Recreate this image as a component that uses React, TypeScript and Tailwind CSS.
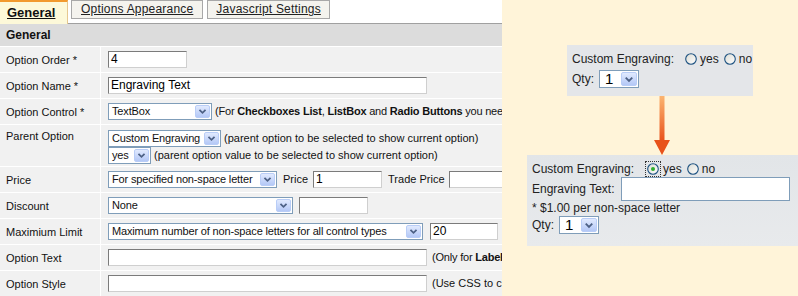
import React from "react";

function Chevron() {
  return (
    <svg width="15" height="13" viewBox="0 0 15 13">
      <path d="M4 4.5 L7.5 8 L11 4.5" fill="none" stroke="#4d6185" strokeWidth="2" />
    </svg>
  );
}

function Select({ w, text }: { w: string; text: string }) {
  return (
    <div className={`${w} h-[17px] text-[11px] tracking-[-0.15px] shrink-0 flex items-stretch border border-[#7f9db9] bg-white`}>
      <div className="flex-1 min-w-0 overflow-hidden whitespace-nowrap pl-[3px] leading-[15px] text-[#111]">{text}</div>
      <div className="w-[15px] m-px shrink-0 rounded-[2px] border border-[#b9cdf7] bg-linear-to-b from-[#e1eafe] to-[#b4c8f6] flex items-center justify-center">
        <Chevron />
      </div>
    </div>
  );
}

function Input({ w, value }: { w: string; value?: string }) {
  return (
    <div
      className={`${w} h-[17px] shrink-0 border border-t-[#7b7b7b] border-l-[#7b7b7b] border-r-[#cfcfcf] border-b-[#cfcfcf] bg-white pl-[2px] text-[12px] leading-[15px] text-black whitespace-nowrap overflow-hidden`}
    >
      {value}
    </div>
  );
}

function Row({ label, children, tall }: { label: string; children: React.ReactNode; tall?: boolean }) {
  return (
    <div className={`flex border-t border-white ${tall ? "h-[42px]" : "h-[26px]"}`}>
      <div
        className={`w-[101px] shrink-0 border-r border-white pl-[6px] flex ${tall ? "items-start pt-[3px]" : "items-center"} leading-[16px]`}
      >
        {label}
      </div>
      <div className={`flex-1 min-w-0 pl-[7px] flex whitespace-nowrap ${tall ? "flex-col items-start pt-[5px]" : "items-center"}`}>
        {children}
      </div>
    </div>
  );
}

function Radio({ checked }: { checked?: boolean }) {
  return (
    <svg width="12" height="12" viewBox="0 0 12 12" className="shrink-0">
      <defs>
        <linearGradient id="rfill" x1="0" y1="0" x2="1" y2="1">
          <stop offset="0" stopColor="#dcdcd4" />
          <stop offset="1" stopColor="#ffffff" />
        </linearGradient>
      </defs>
      <circle cx="6" cy="6" r="5.3" fill="url(#rfill)" stroke="#1c5180" strokeWidth="1.1" />
      {checked && <circle cx="6" cy="6" r="2" fill="#2fae2f" />}
    </svg>
  );
}

function SmallSelect() {
  return (
    <div className="w-[40px] h-[18px] flex items-stretch border border-[#7f9db9] bg-white">
      <div className="flex-1 pl-[5px] text-[15px] leading-[16px] text-black">1</div>
      <div className="w-[16px] m-px shrink-0 rounded-[2px] border border-[#b9cdf7] bg-linear-to-b from-[#e1eafe] to-[#b4c8f6] flex items-center justify-center">
        <Chevron />
      </div>
    </div>
  );
}

export default function App() {
  return (
    <div className="w-[798px] h-[296px] flex overflow-hidden font-['Liberation_Sans',Arial,sans-serif] text-[11px] text-[#111]">
      {/* Left form */}
      <div className="w-[502px] shrink-0 flex flex-col bg-white overflow-hidden">
        {/* Tabs */}
        <div className="h-[24px] shrink-0 flex items-start border-b border-[#a0a0a0]">
          <div className="w-[68px] h-[24px] shrink-0 bg-[#fdf9d9] border-t-2 border-r border-t-[#f29a2e] border-r-[#e6c890] pl-[7px] pt-[2px] text-[13px] font-bold underline leading-[17px] text-[#111]">
            General
          </div>
          <div className="ml-[3px] h-[19px] shrink-0 border border-[#a8a8a8] bg-[#f4f3ee] px-[9px] text-[12px] tracking-[0.2px] underline leading-[16px] text-[#222]">
            Options Appearance
          </div>
          <div className="ml-[4px] h-[19px] shrink-0 border border-[#a8a8a8] bg-[#f4f3ee] px-[8px] text-[12px] tracking-[0.2px] underline leading-[16px] text-[#222]">
            Javascript Settings
          </div>
        </div>
        {/* Header */}
        <div className="h-[22px] shrink-0 bg-[#dcdcdc] pl-[6px] flex items-center text-[12px] font-bold text-[#111]">
          General
        </div>
        {/* Rows */}
        <div className="flex-1 flex flex-col bg-[#f1f1f1]">
          <Row label="Option Order *">
            <Input w="w-[79px]" value="4" />
          </Row>
          <Row label="Option Name *">
            <Input w="w-[319px]" value="Engraving Text" />
          </Row>
          <Row label="Option Control *">
            <Select w="w-[104px]" text="TextBox" />
            <span className="ml-[3px] tracking-[-0.2px]">
              (For <b>Checkboxes List</b>, <b>ListBox</b> and <b>Radio Buttons</b> you need to add option values)
            </span>
          </Row>
          <Row label="Parent Option" tall>
            <div className="flex items-center">
              <Select w="w-[113px]" text="Custom Engraving" />
              <span className="ml-[3px]">(parent option to be selected to show current option)</span>
            </div>
            <div className="flex items-center">
              <Select w="w-[43px]" text="yes" />
              <span className="ml-[3px]">(parent option value to be selected to show current option)</span>
            </div>
          </Row>
          <Row label="Price">
            <Select w="w-[169px]" text="For specified non-space letter" />
            <span className="ml-[6px]">Price</span>
            <div className="ml-[5px]">
              <Input w="w-[69px]" value="1" />
            </div>
            <span className="ml-[6px]">Trade Price</span>
            <div className="ml-[4px]">
              <Input w="w-[69px]" />
            </div>
          </Row>
          <Row label="Discount">
            <Select w="w-[185px]" text="None" />
            <div className="ml-[6px]">
              <Input w="w-[69px]" />
            </div>
          </Row>
          <Row label="Maximium Limit">
            <Select w="w-[315px]" text="Maximum number of non-space letters for all control types" />
            <div className="ml-[7px]">
              <Input w="w-[68px]" value="20" />
            </div>
          </Row>
          <Row label="Option Text">
            <Input w="w-[319px]" />
            <span className="ml-[5px] tracking-[-0.2px]">
              (Only for <b>Label</b> control)
            </span>
          </Row>
          <Row label="Option Style">
            <Input w="w-[319px]" />
            <span className="ml-[5px]">(Use CSS to change style)</span>
          </Row>
        </div>
      </div>

      {/* Right illustration */}
      <div className="flex-1 bg-[#fff4d9] flex flex-col pt-[45px] text-[12px] text-[#222]">
        <div className="ml-[65px] w-[186px] h-[51px] bg-[#e4e6e9] pl-[5px] pt-[6px] flex flex-col">
          <div className="flex items-center h-[16px] whitespace-nowrap">
            <span>Custom Engraving:</span>
            <span className="ml-[11px]">
              <Radio />
            </span>
            <span className="ml-[3px]">yes</span>
            <span className="ml-[5px]">
              <Radio />
            </span>
            <span className="ml-[3px]">no</span>
          </div>
          <div className="flex items-center mt-[3px] h-[18px]">
            <span>Qty:</span>
            <span className="ml-[5px]">
              <SmallSelect />
            </span>
          </div>
        </div>
        <div className="ml-[150px] h-[59px]">
          <svg width="20" height="59" viewBox="0 0 20 59">
            <defs>
              <linearGradient id="arr" x1="0" y1="0" x2="0" y2="1">
                <stop offset="0" stopColor="#fbb470" />
                <stop offset="1" stopColor="#e8501a" />
              </linearGradient>
            </defs>
            <rect x="7.5" y="0" width="5" height="46" fill="url(#arr)" />
            <polygon points="2,44 18,44 10,59" fill="#e8521a" />
          </svg>
        </div>
        <div className="ml-[25px] h-[91px] bg-linear-to-b from-[#e2e5e8] to-[#e8eaec] pl-[5px] pt-[5px] flex flex-col">
          <div className="flex items-center h-[17px] whitespace-nowrap">
            <span>Custom Engraving:</span>
            <span className="ml-[11px] border border-dotted border-[#333] p-px flex">
              <Radio checked />
            </span>
            <span className="ml-[2px]">yes</span>
            <span className="ml-[5px]">
              <Radio />
            </span>
            <span className="ml-[3px]">no</span>
          </div>
          <div className="flex items-center h-[24px] whitespace-nowrap">
            <span>Engraving Text:</span>
            <div className="ml-[6px] w-[169px] h-[24px] border border-[#7f9db9] bg-white" />
          </div>
          <div className="h-[15px] leading-[15px] whitespace-nowrap">* $1.00 per non-space letter</div>
          <div className="flex items-center h-[18px]">
            <span>Qty:</span>
            <span className="ml-[5px]">
              <SmallSelect />
            </span>
          </div>
        </div>
      </div>
    </div>
  );
}
